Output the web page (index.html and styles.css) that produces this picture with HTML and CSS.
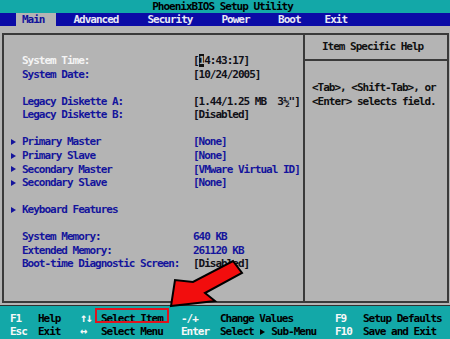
FILE: index.html
```html
<!DOCTYPE html>
<html>
<head>
<meta charset="utf-8">
<link rel="stylesheet" href="styles.css">
</head>
<body>
<div class="screen">
  <header class="title">PhoenixBIOS Setup Utility</header>
  <nav class="menu">
    <span class="tab tab-main">Main</span>
    <span class="tab tab-adv">Advanced</span>
    <span class="tab tab-sec">Security</span>
    <span class="tab tab-pow">Power</span>
    <span class="tab tab-boot">Boot</span>
    <span class="tab tab-exit">Exit</span>
  </nav>
  <main class="area">
    <div class="frame">
      <section class="pane-left">
        <div class="group">
          <div class="row selected"><span class="mark"></span><span class="label">System Time:</span><span class="value dark">[<span class="cursor">1</span>4:43:17]</span></div>
          <div class="row"><span class="mark"></span><span class="label">System Date:</span><span class="value dark">[10/24/2005]</span></div>
        </div>
        <div class="group">
          <div class="row"><span class="mark"></span><span class="label">Legacy Diskette A:</span><span class="value dark">[1.44/1.25 MB  3½"]</span></div>
          <div class="row"><span class="mark"></span><span class="label">Legacy Diskette B:</span><span class="value dark">[Disabled]</span></div>
        </div>
        <div class="group">
          <div class="row"><span class="mark"><i class="tri"></i></span><span class="label">Primary Master</span><span class="value">[None]</span></div>
          <div class="row"><span class="mark"><i class="tri"></i></span><span class="label">Primary Slave</span><span class="value">[None]</span></div>
          <div class="row"><span class="mark"><i class="tri"></i></span><span class="label">Secondary Master</span><span class="value">[VMware Virtual ID]</span></div>
          <div class="row"><span class="mark"><i class="tri"></i></span><span class="label">Secondary Slave</span><span class="value">[None]</span></div>
        </div>
        <div class="group">
          <div class="row"><span class="mark"><i class="tri"></i></span><span class="label">Keyboard Features</span><span class="value"></span></div>
        </div>
        <div class="group">
          <div class="row"><span class="mark"></span><span class="label">System Memory:</span><span class="value">640 KB</span></div>
          <div class="row"><span class="mark"></span><span class="label">Extended Memory:</span><span class="value">261120 KB</span></div>
          <div class="row"><span class="mark"></span><span class="label">Boot-time Diagnostic Screen:</span><span class="value dark">[Disabled]</span></div>
        </div>
      </section>
      <aside class="pane-right">
        <div class="help-head">Item Specific Help</div>
        <div class="help-body">
          <div class="help-line">&lt;Tab&gt;, &lt;Shift-Tab&gt;, or</div>
          <div class="help-line">&lt;Enter&gt; selects field.</div>
        </div>
      </aside>
    </div>
  </main>
  <footer class="keys">
    <span class="key">F1</span><span class="desc">Help</span>
    <span class="key arrows">↑↓</span><span class="desc"><span class="boxed">Select Item</span></span>
    <span class="key">-/+</span><span class="desc">Change Values</span>
    <span class="key">F9</span><span class="desc">Setup Defaults</span>
    <span class="key">Esc</span><span class="desc">Exit</span>
    <span class="key arrows">↔</span><span class="desc">Select Menu</span>
    <span class="key">Enter</span><span class="desc">Select <i class="tri tri-black"></i> Sub-Menu</span>
    <span class="key">F10</span><span class="desc">Save and Exit</span>
  </footer>
  <svg class="arrow" width="450" height="339" viewBox="0 0 450 339">
    <polygon points="171,306 215,301 205,293 242,273 233,261 193,282 175,280" fill="#f20d0d" stroke="#000" stroke-width="2" stroke-linejoin="miter"/>
  </svg>
</div>
</body>
</html>
```

FILE: styles.css
```css
html, body {
  margin: 0;
  padding: 0;
  background: #b4b4b4;
}

.screen {
  position: relative;
  width: 450px;
  height: 339px;
  overflow: hidden;
  display: flex;
  flex-direction: column;
  background: #b4b4b4;
  font-family: "DejaVu Sans Mono", "Liberation Mono", monospace;
  font-weight: bold;
  font-size: 11px;
  letter-spacing: -1px;
  line-height: 13.56px;
  white-space: nowrap;
}

.title {
  height: 13px;
  line-height: 13px;
  background: #13a8a8;
  color: #000;
  text-align: center;
  padding-right: 5px;
}

.menu {
  height: 13px;
  line-height: 13px;
  background: #0b0ba6;
  color: #e8e8f4;
  display: flex;
}

.tab-main {
  margin-left: 16px;
  padding: 0 11px 0 6px;
  background: #b4b4b4;
  color: #12129a;
}
.tab-adv { margin-left: 18px; }
.tab-sec { margin-left: 29px; }
.tab-pow { margin-left: 29px; }
.tab-boot { margin-left: 28.5px; }
.tab-exit { margin-left: 24px; }

.area {
  flex: 1;
  display: flex;
  padding: 7px 1px 2px 2px;
}

.frame {
  flex: 1;
  display: flex;
  border: 2px solid #3a3a3a;
}

.pane-left {
  width: 301px;
  box-sizing: border-box;
  border-right: 2px solid #3a3a3a;
  padding: 19.2px 0 0 6px;
}

.group {
  margin-bottom: 13.56px;
}

.row {
  display: grid;
  grid-template-columns: 12px 171px 1fr;
  height: 13.56px;
  color: #14149c;
}

.row.selected .label {
  color: #f4f4f4;
}

.value {
  white-space: pre;
}

.mark {
  display: flex;
  align-items: center;
}

.tri {
  display: inline-block;
  width: 0;
  height: 0;
  border-left: 5px solid #14149c;
  border-top: 3px solid transparent;
  border-bottom: 3px solid transparent;
  vertical-align: middle;
  margin: 0 0.6px;
}

.tri-black {
  border-left-color: #000;
}

.value.dark {
  color: #101018;
}

.cursor {
  background: #101010;
  color: #b4b4b4;
}

.pane-right {
  flex: 1;
  display: flex;
  flex-direction: column;
  color: #101010;
}

.help-head {
  height: 24px;
  line-height: 24px;
  padding-left: 17px;
  border-bottom: 2px solid #3a3a3a;
}

.help-body {
  padding: 20.4px 0 0 7px;
}

.keys {
  height: 34px;
  box-sizing: border-box;
  border-top: 1px solid #303030;
  background: #13a8a8;
  padding: 5.5px 0 0 10px;
  display: grid;
  grid-template-columns: 28px 42px 21px 80px 39px 115px 28px 1fr;
  grid-auto-rows: 13.56px;
}

.key {
  color: #f8f8f8;
}

.key.arrows {
  font-size: 12px;
  letter-spacing: -1.5px;
}

.desc {
  color: #000;
}

.boxed {
  position: relative;
}

.boxed::after {
  content: "";
  position: absolute;
  left: -6px;
  right: -6px;
  top: -4px;
  bottom: 2px;
  border: 2px solid #e0141e;
}

.arrow {
  position: absolute;
  left: 0;
  top: 0;
  pointer-events: none;
}
```
